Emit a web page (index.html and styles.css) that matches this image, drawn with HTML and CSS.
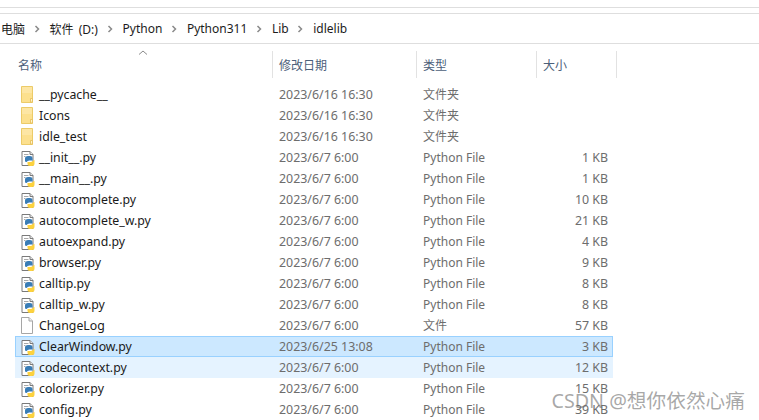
FILE: index.html
```html
<!DOCTYPE html>
<html lang="zh-CN">
<head>
<meta charset="utf-8">
<title>idlelib</title>
<link rel="stylesheet" href="styles.css">
</head>
<body>
<svg class="defs" width="0" height="0" aria-hidden="true">
  <symbol id="folder" viewBox="0 0 14 18">
    <path d="M1.5 .5H12.5V16.5H1.5Z" fill="#fce08e" stroke="#eccb68"/>
    <path d="M2 1H12V7H2Z" fill="#fde6a4"/>
    <path d="M10.5 16V12.5H12.5V16Z" fill="#fff3c9" stroke="#e4bb55" stroke-width=".8"/>
  </symbol>
  <symbol id="pyfile" viewBox="-1.5 0 16 18">
    <path d="M1.5 2.5H9.5L12.5 5.5V16.5H1.5Z" fill="#fff" stroke="#7a7a7a"/>
    <path d="M9.5 2.5V5.5H12.5" fill="#e8e8e8" stroke="#7a7a7a"/>
    <path d="M3.5 5.5H8M3.5 7.5H5" stroke="#a8a8a8"/>
    <path d="M4.5 12.5V9.5Q4.5 7 7.5 7H9.5Q12 7 12 9V11.5H8V12H7Q6.5 13.5 4.5 12.5Z" fill="#3a7db6"/>
    <path d="M14 11V14.5Q14 17 11.5 17H9.5Q7 17 7 15V13H11V12.5H12Q12.5 11 14 11Z" fill="#fdd23d"/>
  </symbol>
  <symbol id="blank" viewBox="0 0 14 18">
    <path d="M1.5 .5H9L12.5 4V16.5H1.5Z" fill="#fff" stroke="#a6a6a6"/>
    <path d="M9 .5V4H12.5" fill="#efefef" stroke="#a6a6a6"/>
  </symbol>
  <symbol id="chev" viewBox="0 0 6 8">
    <path d="M1.5 1L4.5 4L1.5 7" fill="none" stroke="#8a8a8a" stroke-width="1.5"/>
  </symbol>
</svg>

<div class="window">
  <div class="ribbon-edge"></div>
  <nav class="crumbs">
    <span class="crumb">电脑</span><svg class="chev"><use href="#chev"/></svg>
    <span class="crumb">软件 (D:)</span><svg class="chev"><use href="#chev"/></svg>
    <span class="crumb">Python</span><svg class="chev"><use href="#chev"/></svg>
    <span class="crumb">Python311</span><svg class="chev"><use href="#chev"/></svg>
    <span class="crumb">Lib</span><svg class="chev"><use href="#chev"/></svg>
    <span class="crumb">idlelib</span>
  </nav>

  <div class="head">
    <div class="hcell hname">名称<svg class="sort" viewBox="0 0 10 5"><path d="M1 4.5L5 1L9 4.5" fill="none" stroke="#8a8a8a"/></svg></div>
    <div class="hcell hdate">修改日期</div>
    <div class="hcell htype">类型</div>
    <div class="hcell hsize">大小</div>
  </div>

  <div class="list">
    <div class="row"><div class="name"><svg class="ico"><use href="#folder"/></svg>__pycache__</div><div class="date">2023/6/16 16:30</div><div class="type">文件夹</div><div class="size"></div></div>
    <div class="row"><div class="name"><svg class="ico"><use href="#folder"/></svg>Icons</div><div class="date">2023/6/16 16:30</div><div class="type">文件夹</div><div class="size"></div></div>
    <div class="row"><div class="name"><svg class="ico"><use href="#folder"/></svg>idle_test</div><div class="date">2023/6/16 16:30</div><div class="type">文件夹</div><div class="size"></div></div>
    <div class="row"><div class="name"><svg class="ico"><use href="#pyfile"/></svg>__init__.py</div><div class="date">2023/6/7 6:00</div><div class="type">Python File</div><div class="size">1 KB</div></div>
    <div class="row"><div class="name"><svg class="ico"><use href="#pyfile"/></svg>__main__.py</div><div class="date">2023/6/7 6:00</div><div class="type">Python File</div><div class="size">1 KB</div></div>
    <div class="row"><div class="name"><svg class="ico"><use href="#pyfile"/></svg>autocomplete.py</div><div class="date">2023/6/7 6:00</div><div class="type">Python File</div><div class="size">10 KB</div></div>
    <div class="row"><div class="name"><svg class="ico"><use href="#pyfile"/></svg>autocomplete_w.py</div><div class="date">2023/6/7 6:00</div><div class="type">Python File</div><div class="size">21 KB</div></div>
    <div class="row"><div class="name"><svg class="ico"><use href="#pyfile"/></svg>autoexpand.py</div><div class="date">2023/6/7 6:00</div><div class="type">Python File</div><div class="size">4 KB</div></div>
    <div class="row"><div class="name"><svg class="ico"><use href="#pyfile"/></svg>browser.py</div><div class="date">2023/6/7 6:00</div><div class="type">Python File</div><div class="size">9 KB</div></div>
    <div class="row"><div class="name"><svg class="ico"><use href="#pyfile"/></svg>calltip.py</div><div class="date">2023/6/7 6:00</div><div class="type">Python File</div><div class="size">8 KB</div></div>
    <div class="row"><div class="name"><svg class="ico"><use href="#pyfile"/></svg>calltip_w.py</div><div class="date">2023/6/7 6:00</div><div class="type">Python File</div><div class="size">8 KB</div></div>
    <div class="row"><div class="name"><svg class="ico"><use href="#blank"/></svg>ChangeLog</div><div class="date">2023/6/7 6:00</div><div class="type">文件</div><div class="size">57 KB</div></div>
    <div class="row selected"><div class="name"><svg class="ico"><use href="#pyfile"/></svg>ClearWindow.py</div><div class="date">2023/6/25 13:08</div><div class="type">Python File</div><div class="size">3 KB</div></div>
    <div class="row hover"><div class="name"><svg class="ico"><use href="#pyfile"/></svg>codecontext.py</div><div class="date">2023/6/7 6:00</div><div class="type">Python File</div><div class="size">12 KB</div></div>
    <div class="row"><div class="name"><svg class="ico"><use href="#pyfile"/></svg>colorizer.py</div><div class="date">2023/6/7 6:00</div><div class="type">Python File</div><div class="size">15 KB</div></div>
    <div class="row"><div class="name"><svg class="ico"><use href="#pyfile"/></svg>config.py</div><div class="date">2023/6/7 6:00</div><div class="type">Python File</div><div class="size">39 KB</div></div>
  </div>
  <div class="watermark">CSDN @想你依然心痛</div>
</div>
</body>
</html>
```

FILE: styles.css
```css
html, body {
  margin: 0;
  padding: 0;
  height: 100%;
  overflow: hidden;
  background: #fff;
}
.defs { position: absolute; }
.window {
  position: relative;
  height: 420px;
  overflow: hidden;
  font-family: "Noto Sans", "Noto Sans CJK SC", sans-serif;
  font-size: 12px;
  color: #1a1a1a;
}
.ribbon-edge {
  height: 5px;
  margin-top: 7px;
  border-top: 1px solid #dedede;
  border-bottom: 1px solid #dedede;
}
.crumbs {
  display: flex;
  align-items: center;
  height: 29px;
  padding-left: 1px;
  border-bottom: 1px solid #dedede;
  font-size: 12px;
  color: #1c1c1c;
  word-spacing: 2px;
}
.crumb { white-space: nowrap; }
.chev {
  width: 6px;
  height: 8px;
  margin: 0 10px 0 8.6px;
  flex: none;
}
.head {
  display: grid;
  grid-template-columns: 272px 144px 120px 81px;
  height: 27px;
  margin-top: 7px;
}
.hcell {
  position: relative;
  padding: 6px 0 0 6px;
  border-left: 1px solid #e2e2e2;
  color: #4c607a;
  font-size: 12px;
  line-height: 17px;
}
.hname { border-left: 0; padding-left: 18px; }
.hsize { border-right: 1px solid #e2e2e2; }
.sort {
  position: absolute;
  left: 138px;
  top: -1px;
  width: 10px;
  height: 5px;
}
.list {
  margin: 6px 0 0 15px;
  width: 598px;
}
.row {
  display: grid;
  grid-template-columns: 257px 144px 105px 87px;
  height: 21px;
  line-height: 21px;
  color: #6d6d6d;
  font-size: 12.4px;
}
.name {
  display: flex;
  align-items: center;
  color: #1a1a1a;
  padding-left: 4px;
  font-size: 12.3px;
}
.ico {
  width: 16px;
  height: 18px;
  margin-right: 4px;
  flex: none;
}
.date { padding-left: 7px; }
.type { padding-left: 7px; font-size: 12px; }
.size { text-align: right; }
.selected {
  background: #cce8ff;
  outline: 1px solid #99d1ff;
  outline-offset: -1px;
}
.hover { background: #e5f3ff; }
.watermark {
  position: absolute;
  right: 14px;
  bottom: 7px;
  font-size: 19.7px;
  line-height: 24px;
  color: rgba(110, 110, 110, .6);
  white-space: nowrap;
}
```
